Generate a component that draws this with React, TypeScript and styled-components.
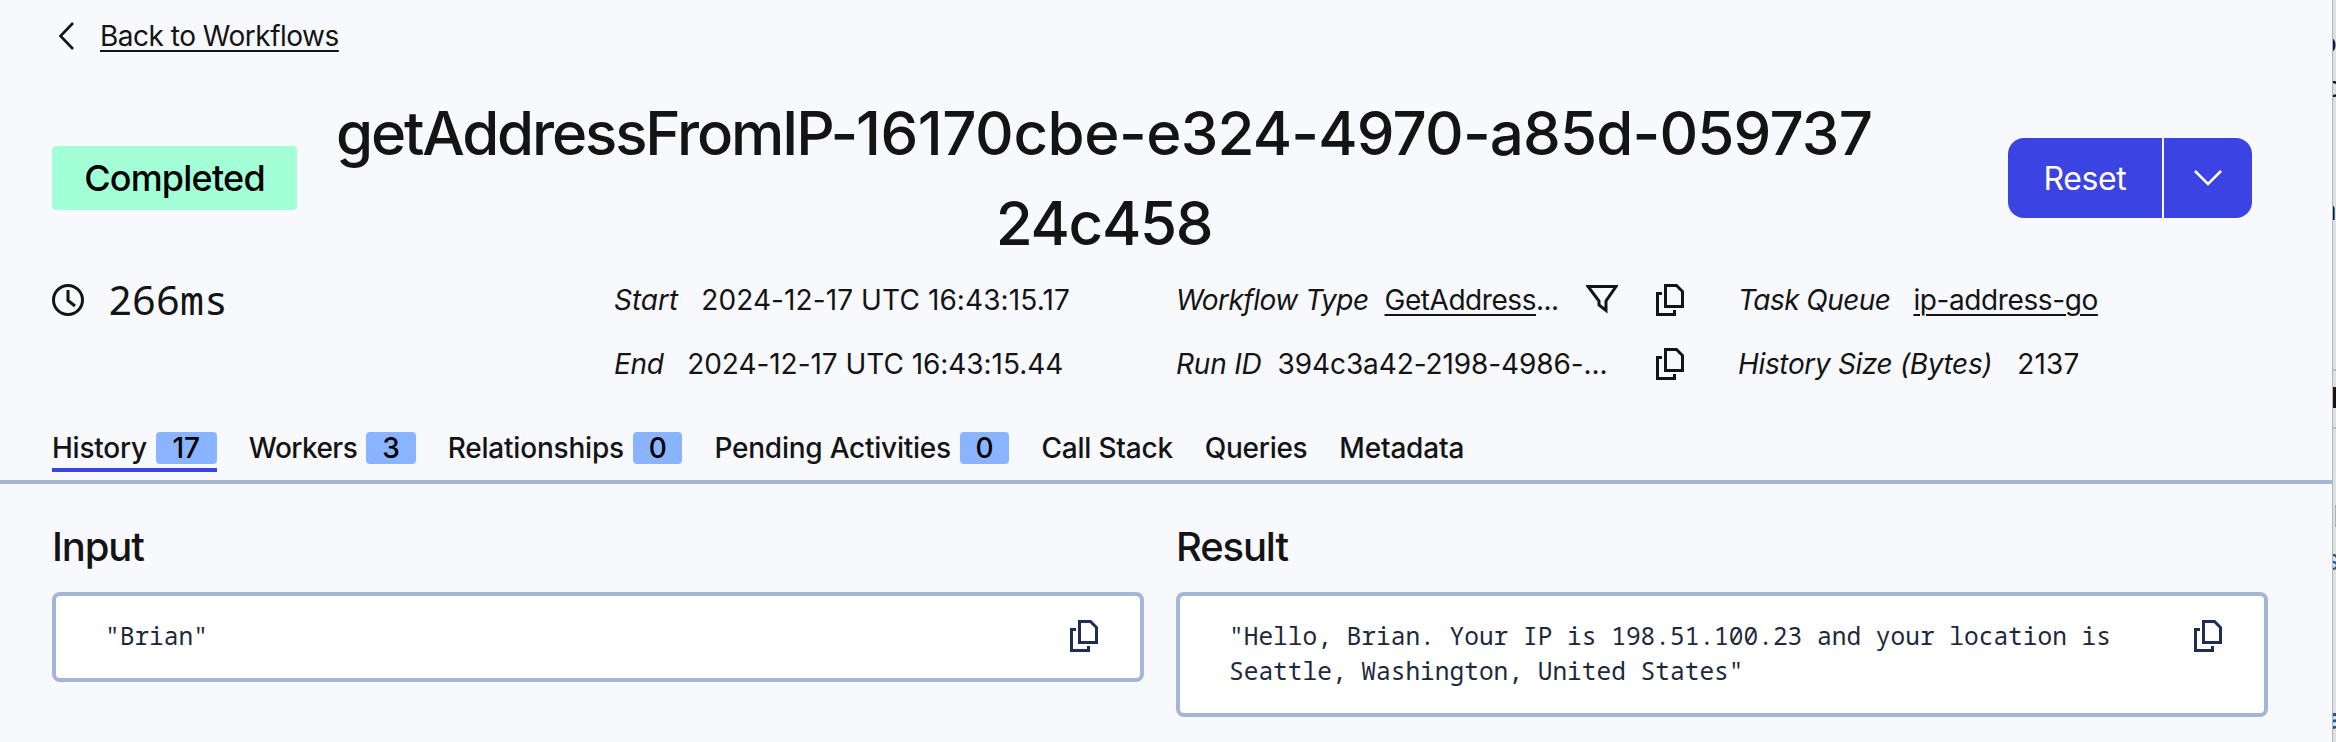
import React from "react";
import styled, { createGlobalStyle } from "styled-components";

const ink = "#141414";
const line = "#a4b5d5";
const indigo = "#3b43e2";
const mono = `"Noto Sans Mono", "DejaVu Sans Mono", monospace`;

const GlobalStyle = createGlobalStyle`
  *, *::before, *::after { box-sizing: border-box; }
  body { margin: 0; background: #f8f9fd; color: ${ink}; font-family: Inter, sans-serif; font-size: 28px; overflow: hidden; }
  h1, h2, p, dl, dt, dd, pre { margin: 0; }
  svg { display: block; flex: none; }
`;

const Screen = styled.div`
  display: flex;
  width: 2336px;
  height: 742px;
  overflow: hidden;
`;
const Page = styled.main`
  flex: none;
  width: 2332px;
  height: 742px;
  background: #f8f9fd;
`;
const BackRow = styled.nav`
  display: flex;
  align-items: center;
  gap: 25px;
  height: 71px;
  padding-left: 58px;
`;
const Link = styled.a<{ $spacing?: number }>`
  color: inherit;
  letter-spacing: ${(p) => p.$spacing ?? -0.5}px;
  text-decoration: underline;
  text-decoration-thickness: 2px;
  text-underline-offset: 4px;
`;
const Header = styled.header`
  display: flex;
  align-items: center;
  height: 180px;
  margin-top: 17px;
  padding: 0 80px 0 52px;
`;
const Status = styled.span`
  flex: none;
  width: 245px;
  height: 64px;
  border-radius: 4px;
  background: #a3ffd5;
  color: #000;
  font-size: 36px;
  font-weight: 500;
  letter-spacing: -0.8px;
  line-height: 64px;
  text-align: center;
  white-space: nowrap;
`;
const Title = styled.h1`
  flex: none;
  width: 1540px;
  margin-left: 37px;
  font-size: 60px;
  font-weight: 500;
  letter-spacing: -1.28px;
  line-height: 90px;
  text-align: center;
  white-space: nowrap;
`;
const Tracked = styled.span<{ $spacing: number }>`
  letter-spacing: ${(p) => p.$spacing}px;
`;
const SplitButton = styled.div`
  display: flex;
  gap: 2px;
  height: 80px;
  margin-left: auto;
  border-radius: 16px;
  overflow: hidden;
`;
const ButtonPart = styled.button<{ $width: number }>`
  display: flex;
  align-items: center;
  justify-content: center;
  width: ${(p) => p.$width}px;
  padding: 0;
  border: 0;
  background: ${indigo};
  color: #fff;
  font: 400 32px Inter, sans-serif;
  letter-spacing: -0.4px;
`;
const Details = styled.section`
  display: grid;
  grid-template-columns: repeat(4, 530px);
  column-gap: 32px;
  height: 128px;
  margin-left: 52px;
  align-items: start;
`;
const Duration = styled.div`
  display: flex;
  align-items: center;
  gap: 24px;
  height: 64px;
  font-family: ${mono};
  font-size: 40px;
`;
const Elapsed = styled.span`
  padding-bottom: 2px;
`;
const Facts = styled.dl`
  display: grid;
  grid-auto-rows: 64px;
`;
const Fact = styled.div<{ $gap: number }>`
  display: flex;
  align-items: center;
  gap: ${(p) => p.$gap}px;
  white-space: nowrap;
`;
const Label = styled.dt<{ $spacing?: number }>`
  font-style: italic;
  letter-spacing: ${(p) => p.$spacing ?? 0}px;
`;
const Value = styled.dd<{ $spacing?: number }>`
  letter-spacing: ${(p) => p.$spacing ?? 0}px;
`;
const Actions = styled.dd`
  display: flex;
  gap: 38px;
  margin-left: auto;
  margin-right: 22px;
`;
const Tabs = styled.nav`
  display: flex;
  gap: 32px;
  height: 68px;
  margin-top: 20px;
  padding: 16px 0 0 52px;
  border-bottom: 4px solid ${line};
`;
const Tab = styled.a<{ $active?: boolean; $spacing?: number }>`
  display: flex;
  align-items: center;
  gap: 9px;
  height: 40px;
  padding-bottom: 4px;
  border-bottom: 4px solid ${(p) => (p.$active ? indigo : "transparent")};
  font-weight: 500;
  letter-spacing: ${(p) => p.$spacing ?? 0}px;
  white-space: nowrap;
`;
const Count = styled.span<{ $wide?: boolean }>`
  width: ${(p) => (p.$wide ? 61 : 49.5)}px;
  height: 32px;
  border-radius: 4px;
  background: #8ab4ff;
  color: #000;
  letter-spacing: 0;
  line-height: 32px;
  text-align: center;
`;
const Payloads = styled.section`
  display: grid;
  grid-template-columns: 1092px 1092px;
  align-items: start;
  gap: 32px;
  padding: 33px 0 0 52px;
`;
const Heading = styled.h2`
  height: 75px;
  font-size: 40px;
  font-weight: 500;
  letter-spacing: -1.15px;
  line-height: 60px;
`;
const Card = styled.div`
  display: flex;
  align-items: flex-start;
  justify-content: space-between;
  padding: 23px 42px 24.6px 49px;
  border: 4px solid ${line};
  border-radius: 8px;
  background: #fff;
  color: #1e293b;

  svg { margin-top: 1px; }
`;
const Code = styled.pre`
  font-family: ${mono};
  font-size: 24.5px;
  line-height: 34.5px;
`;
const Behind = styled.aside`
  position: relative;
  flex: none;
  width: 4px;
  height: 742px;
  overflow: hidden;
  border-left: 1px solid #b5b5b5;
  background: #dfdfdf;
`;
const Sliver = styled.span<{ $top: number; $left: number; $link?: boolean; $bold?: boolean }>`
  position: absolute;
  top: ${(p) => p.$top}px;
  left: ${(p) => p.$left}px;
  color: ${(p) => (p.$link ? "#0f5a9e" : ink)};
  font-weight: ${(p) => (p.$bold ? 700 : 400)};
  line-height: 34px;
`;
const Rule = styled.i<{ $top: number }>`
  position: absolute;
  top: ${(p) => p.$top}px;
  left: 0;
  width: 4px;
  height: 2px;
  background: #bcbcbc;
`;
const Block = styled.i`
  position: absolute;
  top: 505px;
  left: 2px;
  width: 1px;
  height: 22px;
  background: #a9b2bd;
`;

const Copy = ({ color = ink }: { color?: string }) => (
  <svg width="28" height="32" viewBox="0 0 28 32" fill="none" stroke={color} strokeWidth="3">
    <path d="M9.5 1.5H20.5L26.5 7.5V22.5H9.5Z" />
    <path d="M6 9.5H1.5V30.5H18.5V26" />
  </svg>
);

const App = () => (
  <Screen>
    <GlobalStyle />
    <Page>
      <BackRow>
        <svg width="17" height="28" viewBox="0 0 17 28" fill="none" stroke={ink} strokeWidth="2.6">
          <path d="M15 1L2.5 14L15 27" />
        </svg>
        <Link $spacing={-0.5}>Back to Workflows</Link>
      </BackRow>
      <Header>
        <Status>Completed</Status>
        <Title>
          <Tracked $spacing={-2.16}>getAddressFromIP-</Tracked>
          <Tracked $spacing={-0.45}>16170cbe-</Tracked>
          <Tracked $spacing={-0.83}>e324-4970-a85d-059737</Tracked>
          <br />
          24c458
        </Title>
        <SplitButton>
          <ButtonPart $width={154}>Reset</ButtonPart>
          <ButtonPart $width={88}>
            <svg width="28" height="16" viewBox="0 0 28 16" fill="none" stroke="#fff" strokeWidth="2.6">
              <path d="M1 1L14 14L27 1" />
            </svg>
          </ButtonPart>
        </SplitButton>
      </Header>
      <Details>
        <Duration>
          <svg width="32" height="32" viewBox="0 0 32 32" fill="none" stroke={ink} strokeWidth="3">
            <circle cx="16" cy="16" r="14.5" />
            <path d="M16 6V16.5L23 22" />
          </svg>
          <Elapsed>266ms</Elapsed>
        </Duration>
        <Facts>
          <Fact $gap={23}>
            <Label>Start</Label>
            <Value $spacing={0.1}>2024-12-17 UTC 16:43:15.17</Value>
          </Fact>
          <Fact $gap={23.5}>
            <Label $spacing={-0.3}>End</Label>
            <Value $spacing={-0.05}>2024-12-17 UTC 16:43:15.44</Value>
          </Fact>
        </Facts>
        <Facts>
          <Fact $gap={16}>
            <Label $spacing={-0.5}>Workflow Type</Label>
            <Value $spacing={-0.6}><Link $spacing={-0.45}>GetAddress</Link>...</Value>
            <Actions>
              <svg width="32" height="30" viewBox="0 0 32 30" fill="none" stroke={ink} strokeWidth="3">
                <path d="M2 2.5H30L20 17V26.5L13 21V17Z" />
              </svg>
              <Copy />
            </Actions>
          </Fact>
          <Fact $gap={16}>
            <Label $spacing={-0.2}>Run ID</Label>
            <Value $spacing={-0.1}>394c3a42-2198-4986-...</Value>
            <Actions><Copy /></Actions>
          </Fact>
        </Facts>
        <Facts>
          <Fact $gap={23}>
            <Label $spacing={-0.55}>Task Queue</Label>
            <Value><Link $spacing={-0.4}>ip-address-go</Link></Value>
          </Fact>
          <Fact $gap={25}>
            <Label $spacing={-0.35}>History Size (Bytes)</Label>
            <Value $spacing={0.2}>2137</Value>
          </Fact>
        </Facts>
      </Details>
      <Tabs>
        <Tab $active $spacing={-0.25}>History<Count $wide>17</Count></Tab>
        <Tab $spacing={-0.55}>Workers<Count>3</Count></Tab>
        <Tab $spacing={-0.2}>Relationships<Count>0</Count></Tab>
        <Tab $spacing={-0.24}>Pending Activities<Count>0</Count></Tab>
        <Tab $spacing={-0.2}>Call Stack</Tab>
        <Tab $spacing={-0.3}>Queries</Tab>
        <Tab $spacing={-0.2}>Metadata</Tab>
      </Tabs>
      <Payloads>
        <div>
          <Heading>Input</Heading>
          <Card>
            <Code>{`"Brian"`}</Code>
            <Copy color="#1f2c55" />
          </Card>
        </div>
        <div>
          <Heading>Result</Heading>
          <Card>
            <Code>{`"Hello, Brian. Your IP is 198.51.100.23 and your location is\nSeattle, Washington, United States"`}</Code>
            <Copy color="#1f2c55" />
          </Card>
        </div>
      </Payloads>
    </Page>
    <Behind>
      <Sliver $top={26} $left={-13}>o</Sliver>
      <Sliver $top={70} $left={-8}>c</Sliver>
      <Sliver $top={193} $left={-13} $bold>a</Sliver>
      <Rule $top={369} />
      <Sliver $top={381} $left={-2} $bold>l</Sliver>
      <Rule $top={427} />
      <Block />
      <Sliver $top={543} $left={-8} $link>s</Sliver>
      <Sliver $top={702} $left={-6} $link $bold>a</Sliver>
    </Behind>
  </Screen>
);

export default App;
